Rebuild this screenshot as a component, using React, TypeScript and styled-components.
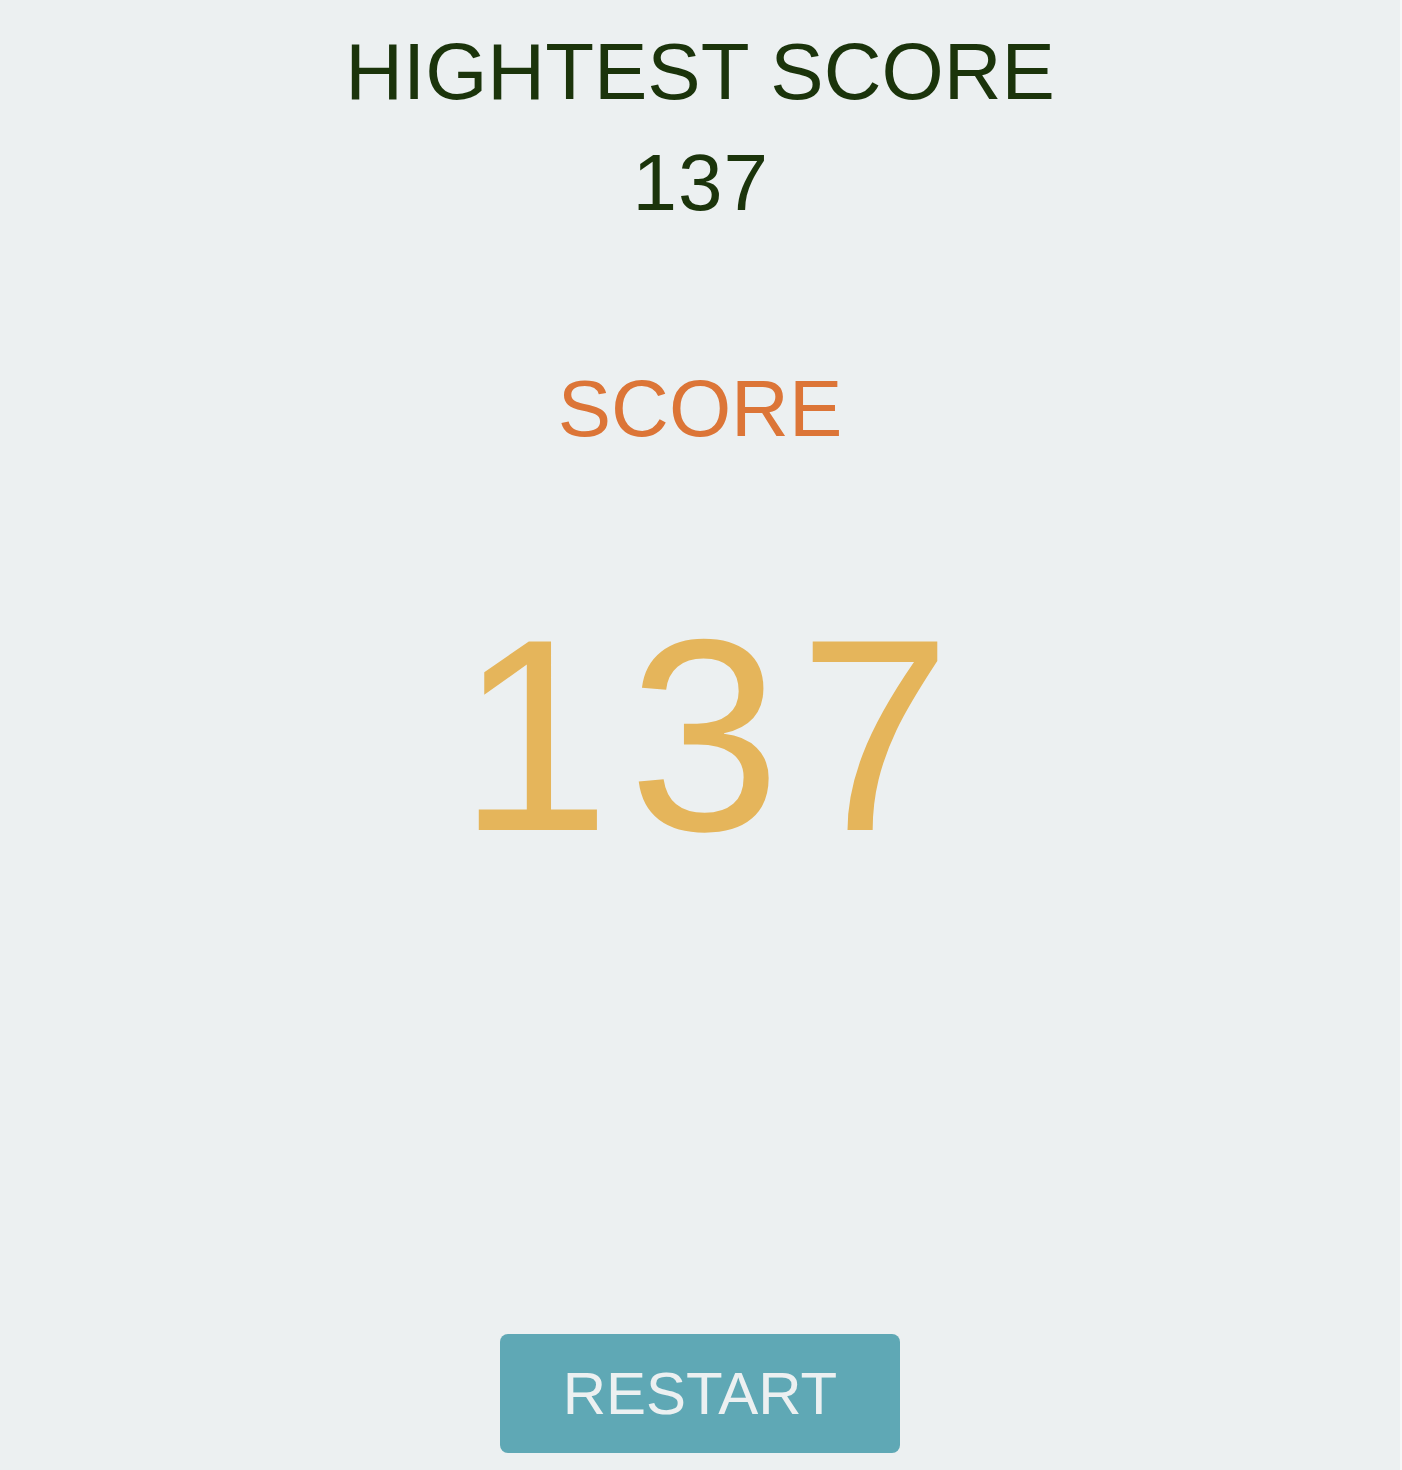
import React from "react";
import styled, { createGlobalStyle } from "styled-components";

const GlobalStyle = createGlobalStyle`
  html, body {
    margin: 0;
    padding: 0;
    background: #f6f8f8;
  }
  body {
    font-family: "Liberation Sans", Arial, Helvetica, sans-serif;
  }
`;

const Screen = styled.main`
  width: 1400px;
  height: 1470px;
  background: #ecf0f1;
  display: flex;
  flex-direction: column;
  align-items: center;
  box-sizing: border-box;
  padding-top: 32px;
`;

const Label = styled.h2<{ $color: string; $gap: number }>`
  margin: ${p => p.$gap}px 0 0;
  font-size: 80px;
  line-height: 80px;
  font-weight: 400;
  color: ${p => p.$color};
`;

const Value = styled.div<{ $color: string; $size: number; $gap: number; $spacing: number }>`
  margin-top: ${p => p.$gap}px;
  padding-left: ${p => p.$spacing * 1.5}px;
  font-size: ${p => p.$size}px;
  line-height: ${p => p.$size}px;
  color: ${p => p.$color};
  letter-spacing: ${p => p.$spacing}px;
`;

const Spacer = styled.div`
  flex: 1;
`;

const RestartButton = styled.button`
  width: 400px;
  height: 119px;
  margin-bottom: 17px;
  border: none;
  border-radius: 8px;
  background: #5fa8b5;
  color: #ecf0f1;
  font-family: "Liberation Sans", Arial, sans-serif;
  font-size: 60px;
  line-height: 1;
  padding: 0;
  cursor: pointer;
`;

export default function App() {
  const best = 137;
  const score = 137;
  return (
    <>
      <GlobalStyle />
      <Screen>
        <Label $color="#1b340b" $gap={0}>HIGHTEST SCORE</Label>
        <Value $color="#1b340b" $size={80} $gap={31} $spacing={1}>{best}</Value>
        <Label $color="#dc7537" $gap={146}>SCORE</Label>
        <Value $color="#e5b55b" $size={274} $gap={149} $spacing={18}>{score}</Value>
        <Spacer />
        <RestartButton>RESTART</RestartButton>
      </Screen>
    </>
  );
}
